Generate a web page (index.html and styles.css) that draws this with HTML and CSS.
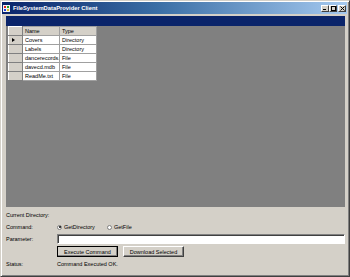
FILE: index.html
```html
<!DOCTYPE html>
<html lang="en">

<head>
    <meta charset="UTF-8">
    <title>FileSystemDataProvider Client</title>
    <link rel="stylesheet" href="styles.css">
</head>

<body>
    <div class="window">
        <div class="title-bar">
            <svg class="app-icon" width="7" height="7" viewBox="0 0 7 7">
                <rect x="0" y="0" width="7" height="7" fill="#f4f4f4"/>
                <rect x="1" y="1" width="2" height="2" fill="#e02020"/>
                <rect x="4" y="1" width="2" height="2" fill="#20a020"/>
                <rect x="1" y="4" width="2" height="2" fill="#2040e0"/>
                <rect x="4" y="4" width="2" height="2" fill="#e0c020"/>
            </svg>
            <span class="title-text">FileSystemDataProvider Client</span>
            <div class="title-buttons">
                <span class="tb-btn">
                    <svg width="5" height="5" viewBox="0 0 5 5"><rect x="0" y="3" width="3" height="1" fill="#000"/></svg>
                </span>
                <span class="tb-btn">
                    <svg width="5" height="5" viewBox="0 0 5 5"><rect x="0.5" y="0.5" width="4" height="4" fill="none" stroke="#000"/><rect x="0" y="0" width="5" height="1" fill="#000"/></svg>
                </span>
                <span class="tb-btn close-btn">
                    <svg width="5" height="5" viewBox="0 0 5 5"><path d="M0.5 0.5 L4.5 4.5 M4.5 0.5 L0.5 4.5" stroke="#000" stroke-width="1"/></svg>
                </span>
            </div>
        </div>

        <div class="client">
            <!-- data grid -->
            <div class="data-grid">
                <div class="grid-caption"></div>
                <div class="grid-body">
                    <table class="files">
                        <tr class="head">
                            <th class="row-head"></th>
                            <th>Name</th>
                            <th>Type</th>
                        </tr>
                        <tr>
                            <td class="row-head"><span class="marker"></span></td>
                            <td>Covers</td>
                            <td>Directory</td>
                        </tr>
                        <tr>
                            <td class="row-head"></td>
                            <td>Labels</td>
                            <td>Directory</td>
                        </tr>
                        <tr>
                            <td class="row-head"></td>
                            <td>dancerecords.</td>
                            <td>File</td>
                        </tr>
                        <tr>
                            <td class="row-head"></td>
                            <td>davecd.mdb</td>
                            <td>File</td>
                        </tr>
                        <tr>
                            <td class="row-head"></td>
                            <td>ReadMe.txt</td>
                            <td>File</td>
                        </tr>
                    </table>
                </div>
            </div>

            <!-- command form -->
            <div class="form">
                <div class="label row-dir">Current Directory:</div>
                <div class="value row-dir"></div>

                <div class="label row-cmd">Command:</div>
                <div class="value row-cmd radios">
                    <label class="radio"><span class="dot checked"></span>GetDirectory</label>
                    <label class="radio"><span class="dot"></span>GetFile</label>
                </div>

                <div class="label row-param">Parameter:</div>
                <div class="value row-param"><div class="input"></div></div>

                <div class="label row-btns"></div>
                <div class="value row-btns buttons">
                    <button class="btn default">Execute Command</button>
                    <button class="btn">Download Selected</button>
                </div>

                <div class="label row-status">Status:</div>
                <div class="value row-status">Command Executed OK.</div>
            </div>
        </div>
    </div>
</body>

</html>
```

FILE: styles.css
```css
body {
    margin: 0;
    padding: 0;
    background-color: #d4d0c8;
    font-family: "Liberation Sans", Arial, sans-serif;
}

.window {
    width: 350px;
    height: 277px;
    box-sizing: border-box;
    background-color: #d4d0c8;
    border: 1px solid;
    border-color: #d4d0c8 #404040 #404040 #d4d0c8;
    box-shadow: inset 1px 1px 0 #ffffff, inset -1px -1px 0 #808080;
    padding: 1px 2px 2px 1px;
    display: flex;
    flex-direction: column;
}

.title-bar {
    height: 12px;
    background: linear-gradient(to right, #0a246a, #3a6ea5 45%, #a6caf0);
    display: flex;
    align-items: center;
    padding-left: 1px;
    gap: 3px;
}

.app-icon {
    flex: none;
}

.title-text {
    color: #ffffff;
    font-weight: bold;
    font-size: 5.8px;
    white-space: nowrap;
}

.title-buttons {
    margin-left: auto;
    display: flex;
    padding-right: 1px;
}

.tb-btn {
    width: 8px;
    height: 7px;
    box-sizing: border-box;
    background-color: #d4d0c8;
    border: 1px solid;
    border-color: #ffffff #404040 #404040 #ffffff;
    display: flex;
    align-items: center;
    justify-content: center;
}

.close-btn {
    margin-left: 1px;
}

.client {
    flex: 1;
    display: flex;
    flex-direction: column;
    padding: 2px 2px 0 4px;
}

.data-grid {
    height: 191px;
    display: flex;
    flex-direction: column;
}

.grid-caption {
    height: 10px;
    background-color: #0a246a;
}

.grid-body {
    flex: 1;
    background-color: #808080;
    padding-left: 2px;
}

.files {
    border-collapse: collapse;
    font-size: 5.5px;
    color: #000000;
}

.files th,
.files td {
    height: 8px;
    padding: 0 0 0 2px;
    text-align: left;
    font-weight: normal;
    border: 1px solid #a0a0a0;
    white-space: nowrap;
    overflow: hidden;
}

.files th {
    background-color: #d4d0c8;
}

.files td {
    background-color: #ffffff;
}

.files th:nth-child(2),
.files td:nth-child(2) {
    width: 34px;
    max-width: 34px;
}

.files th:nth-child(3),
.files td:nth-child(3) {
    width: 34px;
}

.files .row-head,
.files td.row-head {
    width: 13px;
    padding: 0;
    background-color: #d4d0c8;
    border-color: #ffffff #808080 #808080 #ffffff;
}

.marker {
    display: block;
    width: 0;
    height: 0;
    margin-left: 3px;
    border-top: 2px solid transparent;
    border-bottom: 2px solid transparent;
    border-left: 3px solid #000000;
}

.form {
    display: grid;
    grid-template-columns: 51px 1fr;
    grid-template-rows: 13px 12px 12px 13px 12px;
    font-size: 5.5px;
    color: #000000;
    padding-top: 1px;
}

.label,
.value {
    display: flex;
    align-items: center;
    white-space: nowrap;
}

.radio {
    display: flex;
    align-items: center;
    gap: 2px;
    width: 50px;
}

.dot {
    width: 5px;
    height: 5px;
    box-sizing: border-box;
    border-radius: 50%;
    background-color: #ffffff;
    border: 1px solid #808080;
    display: flex;
    align-items: center;
    justify-content: center;
}

.dot.checked::after {
    content: "";
    width: 2px;
    height: 2px;
    border-radius: 50%;
    background-color: #000000;
}

.input {
    width: 100%;
    height: 10px;
    box-sizing: border-box;
    background-color: #ffffff;
    border: 1px solid;
    border-color: #808080 #ffffff #ffffff #808080;
    box-shadow: inset 1px 1px 0 #404040;
}

.buttons {
    gap: 5px;
    align-items: stretch;
    padding: 1px 0;
}

.btn {
    font-family: inherit;
    font-size: 5.5px;
    color: #000000;
    background-color: #d4d0c8;
    border: 1px solid;
    border-color: #ffffff #404040 #404040 #ffffff;
    box-shadow: inset -1px -1px 0 #808080;
    padding: 0;
    width: 61px;
    margin: 0;
}

.btn.default {
    outline: 1px solid #000000;
    outline-offset: -1px;
}
```
